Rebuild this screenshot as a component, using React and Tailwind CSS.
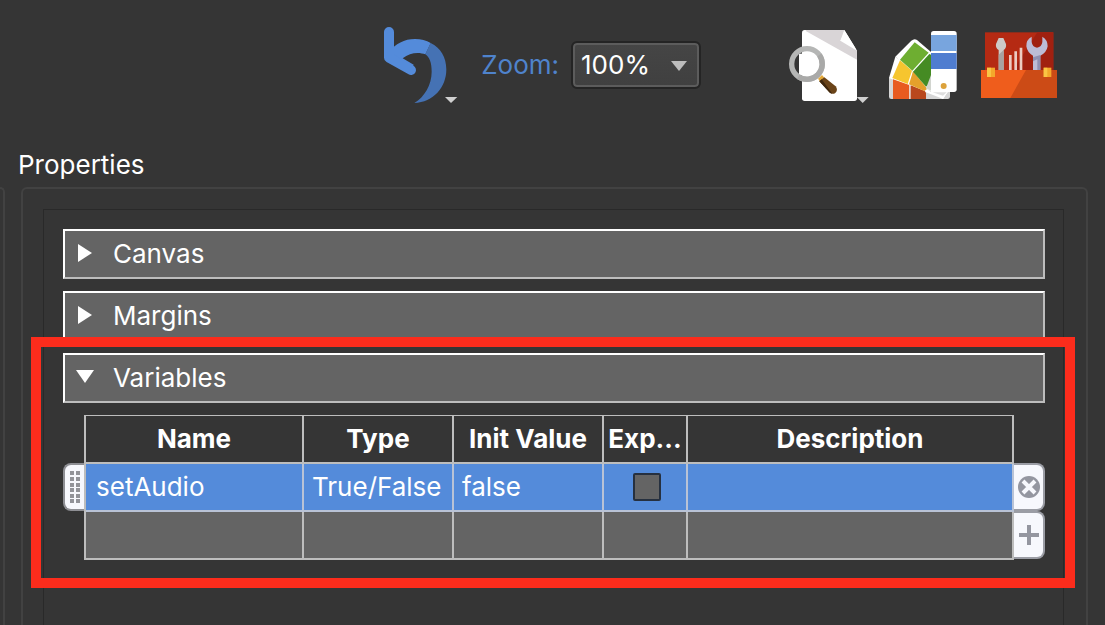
import React, { useState } from 'react';

const ZOOM_LEVELS = ['50%', '75%', '100%', '150%', '200%'];

const COLUMNS = [
    { key: 'name', title: 'Name', width: 'w-[218px]' },
    { key: 'type', title: 'Type', width: 'w-[150px]' },
    { key: 'init', title: 'Init Value', width: 'w-[150px]' },
    { key: 'exposed', title: 'Exp...', width: 'w-[84px]' },
    { key: 'description', title: 'Description', width: '' },
];

const INITIAL_VARIABLES = [
    { id: 1, name: 'setAudio', type: 'True/False', init: 'false', exposed: false, description: '' },
];

const CELL = 'h-12 border-r-2 border-b-2 py-0 pr-0';

function UndoIcon() {
    return (
        <svg viewBox="39 33 228 234" className="h-[78px] w-[76px]" aria-hidden="true">
            <path
                d="M166 118 L182 84 C212 98 229 127 229 163 C229 218 190 262 133 264 C164 246 185 208 185 170 C185 143 179 127 166 118Z"
                fill="#4572b4"
            />
            <path
                d="M57 112 C76 86 103 72 135 72 C153 72 169 76 182 84 L166 118 C149 111 120 111 98 130 L131 149 L118 176 L46 134Z"
                fill="#548bda"
            />
            <path
                d="M57 51 V128 L123 165"
                fill="none"
                stroke="#548bda"
                strokeWidth="30"
                strokeLinecap="round"
                strokeLinejoin="round"
            />
            <path d="M225 246 H262 L243 264Z" fill="#d0d0d0" />
        </svg>
    );
}

function PreviewIcon() {
    return (
        <svg viewBox="21 18 243 234" className="h-[78px] w-[81px] overflow-visible" aria-hidden="true">
            <path d="M74 30 H193 L231 92 V235 Q231 243 223 243 H74 Q66 243 66 235 V38 Q66 30 74 30Z" fill="#fff" />
            <path d="M76 32 L80 30 H193 L181 62 L231 92 V119Z" fill="#d9d5d7" />
            <path d="M193 30 L230 90 C214 72 198 65 181 62 Q190 48 193 30Z" fill="#fff" />
            <path d="M57 101 H81 V166 H57Z" fill="#fff" />
            <circle cx="81" cy="132" r="46" fill="none" stroke="#b5b6b5" strokeWidth="16" />
            <path d="M118 105 A46 46 0 0 1 55 170" fill="none" stroke="#a9a9a8" strokeWidth="16" />
            <path d="M114 176 L126 165 L137 178 L125 191Z" fill="#e3a83a" />
            <path d="M118 184 L133 172 L167 199 Q175 210 166 219 Q157 225 148 217Z" fill="#6a4318" />
            <path d="M118 184 L125 178 L157 221 Q152 221 148 217Z" fill="#3f270d" />
            <path d="M230 231 H266 L248 249Z" fill="#d0d0d0" />
        </svg>
    );
}

function SwatchesIcon() {
    return (
        <svg viewBox="24 18 216 234" className="h-[78px] w-[72px]" aria-hidden="true">
            <path d="M27 174 L60 165 L210 216 V230 Q210 237 203 237 H34 Q27 237 27 230Z" fill="#d6d6d6" />
            <path d="M27 174 L46 110 L200 218 L190 237Z" fill="#fff" />
            <path d="M39 178 L88 195 V237 H39Z" fill="#e85b20" />
            <path d="M88 195 H92 V237 H88Z" fill="#f0e4df" />
            <path d="M92 196 L134 213 L138 218 V237 H92Z" fill="#b9481d" />
            <path d="M46 110 L94 62 Q103 54 111 60 L153 96 V205Z" fill="#fff" />
            <path d="M60 121 L96 152 L83 192 L37 174Z" fill="#f6c52f" />
            <path d="M99 154 L142 206 L133 213 L87 193Z" fill="#e5a02b" />
            <path d="M104 67 L146 98 L97 152 L60 119Z" fill="#6eae31" />
            <path d="M148 102 L153 104 V188 L138 200 L99 155Z" fill="#458b23" />
            <path d="M153 165 L138 205 L153 216Z" fill="#d2d5cf" />
            <path d="M136 203 L156 214 L204 216 L188 237Z" fill="#fff" />
            <path d="M158 217 H200 L189 227Z" fill="#dedede" />
            <rect x="153" y="33" width="77" height="183" rx="8" fill="#fff" />
            <rect x="153" y="45" width="77" height="48" fill="#78a5de" />
            <rect x="153" y="99" width="77" height="48" fill="#4f7dd0" />
            <circle cx="191" cy="198" r="9" fill="#dca23b" />
        </svg>
    );
}

function ToolboxIcon() {
    return (
        <svg viewBox="30 18 231 234" className="h-[78px] w-[77px]" aria-hidden="true">
            <rect x="45" y="37" width="205" height="115" fill="#b52a13" />
            <path d="M202 37 H250 V152 H128Z" fill="#a02010" />
            <path d="M86 54 H100 L108 72 Q110 84 101 90 V152 H86 V90 Q76 84 78 72Z" fill="#cdcac7" />
            <path d="M86 104 L101 90 V152 H86Z" fill="#a7a3a1" />
            <path d="M117 105 H125 V152 H117Z M133 94 H141 V152 H133Z M149 83 H157 V152 H149Z" fill="#eccbc2" />
            <path
                d="M185 50 Q168 59 169 79 Q172 98 189 107 V152 H211 V107 Q230 98 233 79 Q233 59 217 50 L217 66 Q215 81 201 83 Q187 81 185 66Z"
                fill="#bcbcd6"
            />
            <path d="M189 112 L211 105 V152 H202 V118 L189 124Z" fill="#8f90b2" />
            <rect x="33" y="150" width="228" height="84" fill="#ef5d1c" />
            <path d="M168 150 H261 V234 H121Z" fill="#cc4b16" />
            <rect x="51" y="143" width="24" height="28" fill="#f4a82b" />
            <rect x="221" y="143" width="23" height="28" fill="#f4a82b" />
            <path d="M51 143 H63 V171 H51Z M221 143 H232 V171 H221Z" fill="#fac544" />
        </svg>
    );
}

function Disclosure({ open }) {
    return (
        <svg viewBox="0 0 20 20" className="h-5 w-5 shrink-0" aria-hidden="true">
            <path d={open ? 'M1 2 H19 L10 15Z' : 'M3 0 L17 9 L3 18Z'} fill="#fff" />
        </svg>
    );
}

function SectionHeader({ title, open, onToggle }) {
    return (
        <button
            type="button"
            aria-expanded={open}
            onClick={onToggle}
            className="flex h-[50px] w-full items-center gap-[18px] border-2 border-t-white border-r-[#bdbdbd] border-b-[#bdbdbd] border-l-white bg-[#646464] px-[10px] text-left"
        >
            <Disclosure open={open} />
            <span>{title}</span>
        </button>
    );
}

function DragHandle() {
    return (
        <button
            type="button"
            aria-label="Move variable"
            className="flex h-12 w-full items-center justify-center rounded-l-lg border-2 border-r-0 border-[#8e8f94] bg-[#f7f8fd]"
        >
            <svg viewBox="0 0 10 32" className="h-8 w-[10px]" aria-hidden="true">
                {[0, 6, 12, 17, 23, 28].map((y) => (
                    <path key={y} d={`M0 ${y}h4v4h-4z M6 ${y}h4v4h-4z`} fill="#929399" />
                ))}
            </svg>
        </button>
    );
}

function RowButton({ label, onClick, children }) {
    return (
        <button
            type="button"
            aria-label={label}
            onClick={onClick}
            className="flex h-12 w-full items-center justify-center rounded-r-lg border-2 border-l-0 border-[#9b9da5] bg-[#f7f8fd]"
        >
            <svg viewBox="0 0 24 24" className="h-6 w-6" aria-hidden="true">
                {children}
            </svg>
        </button>
    );
}

function VariablesTable({ variables, onChange }) {
    const toggleExposed = (id) =>
        onChange(variables.map((item) => (item.id === id ? { ...item, exposed: !item.exposed } : item)));

    const addVariable = () =>
        onChange([
            ...variables,
            { id: Date.now(), name: 'variable', type: 'True/False', init: 'false', exposed: false, description: '' },
        ]);

    return (
        <div className="mt-3 flex">
            <div className="w-[21px] shrink-0 pt-12">
                {variables.map((item) => (
                    <DragHandle key={item.id} />
                ))}
            </div>

            <table className="min-w-0 flex-1 table-fixed border-separate border-spacing-0 border-t border-l-2 border-[#bdbdbd]">
                <thead>
                    <tr>
                        {COLUMNS.map((column) => (
                            <th key={column.key} scope="col" className={`${CELL} border-[#bdbdbd] pl-0 font-bold ${column.width}`}>
                                {column.title}
                            </th>
                        ))}
                    </tr>
                </thead>
                <tbody>
                    {variables.map((item) => (
                        <tr key={item.id} className="bg-[#548bda]">
                            <td className={`${CELL} border-[#b9c3d6] pl-[10px]`}>{item.name}</td>
                            <td className={`${CELL} border-[#b9c3d6] pl-2`}>{item.type}</td>
                            <td className={`${CELL} border-[#b9c3d6] pl-2`}>{item.init}</td>
                            <td className={`${CELL} border-[#b9c3d6] pl-1`}>
                                <input
                                    type="checkbox"
                                    aria-label={`Expose ${item.name}`}
                                    checked={item.exposed}
                                    onChange={() => toggleExposed(item.id)}
                                    className="mx-auto block h-7 w-7 appearance-none rounded-xs border-2 border-[#26303f] bg-[#646464] checked:bg-[#dcdcdc]"
                                />
                            </td>
                            <td className={`${CELL} border-[#b9c3d6] pl-2`}>{item.description}</td>
                        </tr>
                    ))}
                    <tr className="bg-[#646464]">
                        {COLUMNS.map((column) => (
                            <td key={column.key} className={`${CELL} border-[#bdbdbd]`} />
                        ))}
                    </tr>
                </tbody>
            </table>

            <div className="w-[31px] shrink-0 pt-12">
                {variables.map((item) => (
                    <RowButton
                        key={item.id}
                        label={`Delete ${item.name}`}
                        onClick={() => onChange(variables.filter((other) => other.id !== item.id))}
                    >
                        <circle cx="12" cy="12" r="11" fill="#9496a0" />
                        <path d="M6 6 L18 18 M18 6 L6 18" stroke="#f7f8fd" strokeWidth="4" />
                    </RowButton>
                ))}
                <RowButton label="Add variable" onClick={addVariable}>
                    <path d="M12 2 V22 M2 12 H22" stroke="#9496a0" strokeWidth="4" />
                </RowButton>
            </div>
        </div>
    );
}

export default function App() {
    const [zoom, setZoom] = useState('100%');
    const [open, setOpen] = useState({ canvas: false, margins: false, variables: true });
    const [variables, setVariables] = useState(INITIAL_VARIABLES);

    const toggle = (key) => setOpen((current) => ({ ...current, [key]: !current[key] }));

    return (
        <div className="flex min-h-screen flex-col bg-[#353535] font-['Inter',sans-serif] text-[26px] leading-8 text-white">
            <header className="flex items-center justify-end pt-[26px] pr-12">
                <button type="button" aria-label="Undo">
                    <UndoIcon />
                </button>
                <label htmlFor="zoom" className="ml-[22px] text-[#4f83cc]">
                    Zoom:
                </label>
                <div className="relative ml-[14px]">
                    <select
                        id="zoom"
                        value={zoom}
                        onChange={(event) => setZoom(event.target.value)}
                        className="block h-[44px] w-[126px] appearance-none rounded-sm border-2 border-[#5c5c5c] bg-linear-to-b from-[#454545] to-[#404040] pl-1.5 outline-2 outline-[#242424]"
                    >
                        {ZOOM_LEVELS.map((level) => (
                            <option key={level}>{level}</option>
                        ))}
                    </select>
                    <svg viewBox="0 0 16 10" className="pointer-events-none absolute top-[18px] right-3 h-[10px] w-4" aria-hidden="true">
                        <path d="M0 0 H16 L8 10Z" fill="#bdbdbd" />
                    </svg>
                </div>
                <div className="ml-22 flex items-center gap-5">
                    <button type="button" aria-label="Preview">
                        <PreviewIcon />
                    </button>
                    <button type="button" aria-label="Swatches">
                        <SwatchesIcon />
                    </button>
                    <button type="button" aria-label="Toolbox">
                        <ToolboxIcon />
                    </button>
                </div>
            </header>

            <h2 className="mt-[45px] pl-[18px]">Properties</h2>

            <div className="mt-[6px] flex flex-1 gap-4 pr-[17px]">
                <div className="w-[5px] shrink-0 rounded-tr-md border-t-2 border-r-2 border-[#424242]" />

                <div className="flex min-w-0 flex-1 flex-col rounded-t-md border-2 border-b-0 border-[#424242] px-5 pt-5">
                    <div className="mr-0.5 flex flex-1 flex-col gap-3 border border-b-0 border-[#292929] px-[18px] pt-[19px] pb-8 pl-[19px]">
                        <SectionHeader title="Canvas" open={open.canvas} onToggle={() => toggle('canvas')} />
                        <SectionHeader title="Margins" open={open.margins} onToggle={() => toggle('margins')} />

                        <section className="relative">
                            <SectionHeader title="Variables" open={open.variables} onToggle={() => toggle('variables')} />
                            {open.variables ? <VariablesTable variables={variables} onChange={setVariables} /> : null}
                            <div className="pointer-events-none absolute -top-4 -right-[30px] -bottom-7 -left-8 border-10 border-[#fc2c1c]" />
                        </section>
                    </div>
                </div>
            </div>
        </div>
    );
}
